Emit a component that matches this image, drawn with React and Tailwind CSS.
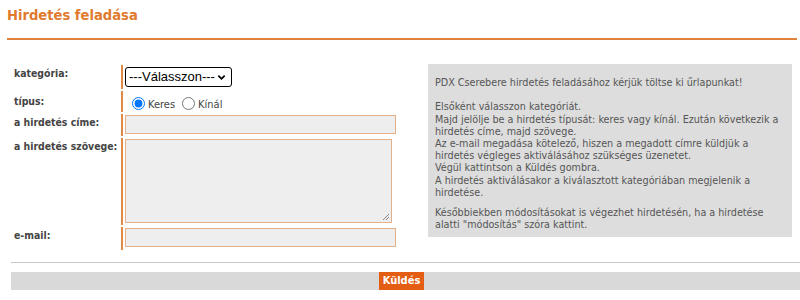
import React from "react";

const F = "font-['DejaVu_Sans_Condensed','DejaVu_Sans',sans-serif]";

function Row({ label, h, lpt = "pt-[2px]", children, cpt = "pt-[2px]" }) {
  return (
    <div className={`flex ${h}`}>
      <div className={`w-[110px] pl-[3px] ${lpt} text-[10.4px] leading-[13px] font-bold text-[#444] whitespace-nowrap`}>
        {label}
      </div>
      <div className={`flex-1 border-l-2 border-[#e08a45] pl-[2px] ${cpt}`}>{children}</div>
    </div>
  );
}

export default function App() {
  return (
    <div className={`w-[800px] h-[300px] overflow-hidden bg-white ${F}`}>
      <h1 className="pt-[6px] pl-[7px] text-[14.6px] leading-[18px] font-bold text-[#e07a2e]">
        Hirdetés feladása
      </h1>
      <div className="ml-[7px] mr-[3px] mt-[14px] h-[2px] bg-[#e0823e]" />

      <div className="flex mt-[24px]">
        <div className="ml-[11px] w-[388px] pt-[1px] flex flex-col gap-[2px]">
          <Row label="kategória:" h="h-[24px]" cpt="pt-[2px]">
            <div className="w-[107px] h-[20px] border border-black rounded-[3px] flex items-center justify-between pl-[3px] pr-[5px] font-['Liberation_Sans',sans-serif] text-[13px] leading-[16px] text-black bg-white whitespace-nowrap">
              <span>---Válasszon---</span>
              <svg width="9" height="9" viewBox="0 0 10 10" className="shrink-0">
                <path d="M1.5 3 L5 6.5 L8.5 3" fill="none" stroke="black" strokeWidth="2" />
              </svg>
            </div>
          </Row>
          <Row label="típus:" h="h-[21px]" lpt="pt-[4px]" cpt="pt-[4px]">
            <div className="flex items-center text-[11px] text-[#444] leading-[13px]">
              <input type="radio" name="t" defaultChecked className="ml-[7px] mr-[3px] w-[13px] h-[13px] accent-[#0075ff]" />
              <span className="mt-[3px]">Keres</span>
              <input type="radio" name="t" className="ml-[7px] mr-[3px] w-[13px] h-[13px]" />
              <span className="mt-[3px]">Kínál</span>
            </div>
          </Row>
          <Row label="a hirdetés címe:" h="h-[22px]" cpt="pt-[1px]">
            <div className="w-[271px] h-[19px] bg-[#eeeeee] border border-[#e3b08a]" />
          </Row>
          <Row label="a hirdetés szövege:" h="h-[87px]" cpt="pt-[1px]">
            <div className="relative w-[267px] h-[84px] bg-[#eeeeee] border border-[#e3b08a]">
              <svg className="absolute right-[1px] bottom-[1px]" width="8" height="8" viewBox="0 0 8 8">
                <path d="M7 1 L1 7 M7 4 L4 7" stroke="#888" strokeWidth="1" />
              </svg>
            </div>
          </Row>
          <Row label="e-mail:" h="h-[23px]" cpt="pt-[1px]">
            <div className="w-[271px] h-[19px] bg-[#eeeeee] border border-[#e3b08a]" />
          </Row>
        </div>

        <div className="ml-[29px] w-[364px] h-[173px] bg-[#dddddd] pl-[7px] pt-[13px] text-[10.7px] leading-[12.2px] text-[#555] whitespace-nowrap">
          PDX Cserebere hirdetés feladásához kérjük töltse ki űrlapunkat!
          <br />
          <br />
          Elsőként válasszon kategóriát.
          <br />
          Majd jelölje be a hirdetés típusát: keres vagy kínál. Ezután következik a
          <br />
          hirdetés címe, majd szövege.
          <br />
          Az e-mail megadása kötelező, hiszen a megadott címre küldjük a
          <br />
          hirdetés végleges aktiválásához szükséges üzenetet.
          <br />
          Végül kattintson a Küldés gombra.
          <br />
          A hirdetés aktiválásakor a kiválasztott kategóriában megjelenik a
          <br />
          hirdetése.
          <div className="mt-[8px]">
            Későbbiekben módosításokat is végezhet hirdetésén, ha a hirdetése
            <br />
            alatti "módosítás" szóra kattint.
          </div>
        </div>
      </div>

      <div className="ml-[11px] mt-[12px] h-px bg-[#c8c8c8]" />
      <div className="ml-[11px] mt-[9px] h-[18px] bg-[#d9d9d9] flex justify-center pr-[8px]">
        <div className="w-[45px] h-[18px] bg-[#e35d12] text-white text-[11px] font-bold leading-[18px] text-center">
          Küldés
        </div>
      </div>
    </div>
  );
}
